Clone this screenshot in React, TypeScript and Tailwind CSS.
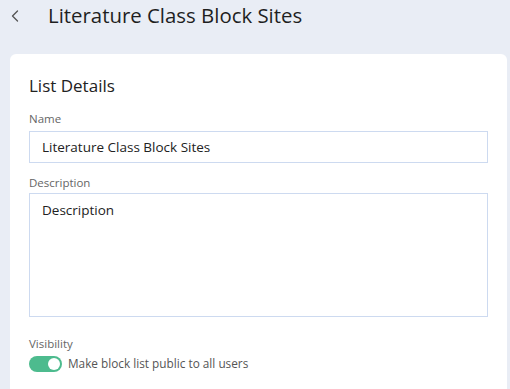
import { ChevronLeft } from 'lucide-react'

const font = { fontFamily: '"Open Sans", Lato, sans-serif' }

function Toggle({ on }: { on: boolean }) {
  return (
    <div
      className={`flex h-[16px] w-[33px] items-center rounded-full px-[2px] ${
        on ? 'justify-end bg-[#4dbb8e]' : 'justify-start bg-gray-300'
      }`}
    >
      <div className="h-[12px] w-[12px] rounded-full bg-white" />
    </div>
  )
}

export default function App() {
  return (
    <div className="h-[389px] w-full overflow-hidden bg-[#e9edf5] text-[#222]" style={font}>
      <div className="flex h-[31px] items-center">
        <ChevronLeft className="ml-[5px] h-[20px] w-[20px] text-[#555]" strokeWidth={1.6} />
        <h1 className="ml-[23px] text-[20.4px] leading-none text-[#1f1f1f]">Literature Class Block Sites</h1>
      </div>

      <div className="ml-[10px] mr-[3px] mt-[23px] rounded-[6px] bg-white px-[19px] pt-[22px] pb-6">
        <h2 className="text-[17px] leading-[20px] text-[#222]">List Details</h2>

        <label className="mt-[16px] block text-[11.5px] leading-[14px] text-[#666]">Name</label>
        <div className="mt-[5px] flex h-[32px] items-center border border-[#cddaf0] px-[12px] text-[13.5px] text-[#222]">
          Literature Class Block Sites
        </div>

        <label className="mt-[13px] block text-[11.5px] leading-[14px] text-[#666]">Description</label>
        <div className="mt-[3px] h-[124px] border border-[#cddaf0] px-[12px] pt-[6px] text-[13.5px] text-[#222]">
          Description
        </div>

        <label className="mt-[20px] block text-[11.5px] leading-[14px] text-[#666]">Visibility</label>
        <div className="mt-[4px] flex items-center gap-[6px]">
          <Toggle on />
          <span className="text-[11.8px] text-[#555]">Make block list public to all users</span>
        </div>
      </div>
    </div>
  )
}
